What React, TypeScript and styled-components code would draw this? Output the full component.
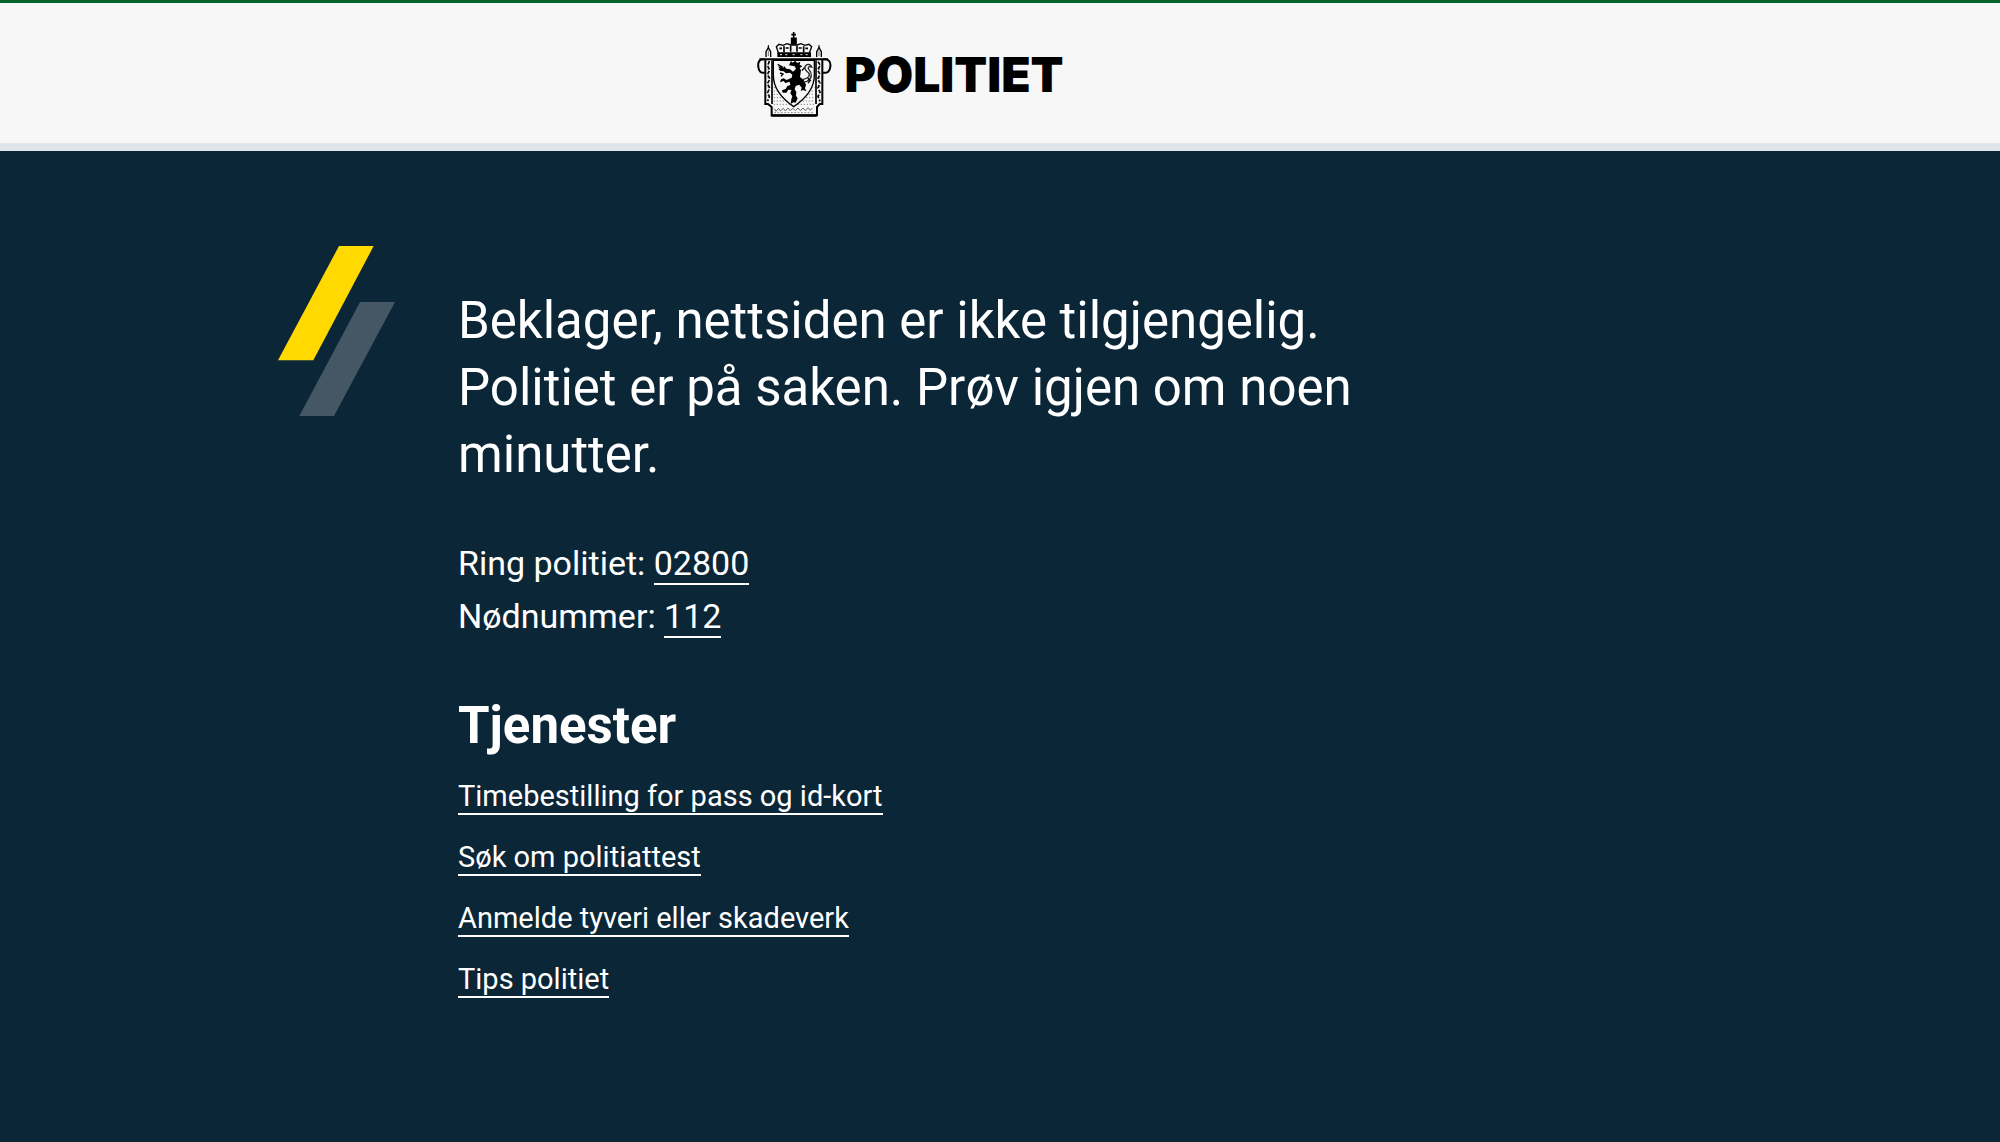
import React from "react";
import styled, { createGlobalStyle } from "styled-components";

const GlobalStyle = createGlobalStyle`
  *, *::before, *::after { box-sizing: border-box; }
  body {
    margin: 0;
    background: #0b2637;
    color: #ffffff;
    font-family: Roboto, "Liberation Sans", sans-serif;
  }
`;

const Header = styled.header`
  display: flex;
  justify-content: center;
  padding: 28px 180px 25px 0;
  background: #f7f7f7;
  border-top: 3px solid #04632a;
  border-bottom: 8px solid #dfe6eb;
`;

const Brand = styled.a`
  display: flex;
  align-items: center;
  gap: 10px;
  color: #000000;
  text-decoration: none;
`;

const BrandName = styled.span`
  font-family: Inter, "Liberation Sans", sans-serif;
  font-size: 48px;
  font-weight: 900;
  line-height: 56px;
`;

const Main = styled.main`
  padding: 95px 180px 96px 0;
`;

const Container = styled.div`
  display: flex;
  align-items: flex-start;
  gap: 63px;
  max-width: 1264px;
  margin: 0 auto;
`;

const Slashes = styled.svg`
  flex: none;
  width: 117px;
  height: 170px;
`;

const Content = styled.div`
  display: flex;
  flex-direction: column;
  gap: 49px;
  min-width: 0;
  padding-top: 41px;
`;

const Message = styled.h1`
  max-width: 960px;
  margin: 0;
  font-size: 51px;
  font-weight: 400;
  line-height: 67px;
`;

const Phones = styled.div`
  font-size: 34px;
  line-height: 53px;
`;

const PhoneLine = styled.p`
  margin: 0;
`;

const TextLink = styled.a`
  color: inherit;
  text-decoration: none;
  border-bottom: 2px solid currentColor;
`;

const SectionTitle = styled.h2`
  margin: 0;
  font-size: 51px;
  font-weight: 700;
  line-height: 67px;
`;

const ServiceList = styled.ul`
  display: flex;
  flex-direction: column;
  gap: 16px;
  margin: 15px 0 0;
  padding: 0;
  list-style: none;
  font-size: 29px;
  line-height: 45px;
`;

const services = [
  "Timebestilling for pass og id-kort",
  "Søk om politiattest",
  "Anmelde tyveri eller skadeverk",
  "Tips politiet",
];

const Crest = () => (
  <svg width="78" height="87" viewBox="54 32 234 261" fill="none" stroke="#000" strokeWidth="5" aria-hidden="true">
    {/* crown */}
    <path d="M167 35v18M160 43h14" />
    <path d="M161 54h13v17h-13z" fill="#000" />
    <path d="M122 100l-7-21 8-7 12 3 12-5 12 4h18l12-4 12 5 12-3 8 7-8 21" strokeWidth="4" />
    <path d="M124 84h8M143 83h9M182 83h9M202 84h8M138 78v18M158 76v18M177 76v18M197 78v18" strokeWidth="5" />
    <path d="M118 96h101v14H118z" fill="#000" stroke="none" />
    <path d="M126 103h6M142 103h6M164 103h6M187 103h6M203 103h6" stroke="#eee" strokeWidth="3" />
    {/* side finials */}
    <path d="M91 74v10M243 74v10" strokeWidth="3" />
    <path d="M84 110V94l7-12 7 12v16M236 110V94l7-12 7 12v16" strokeWidth="4" />
    <path d="M91 91v16M243 91v16" stroke="#777" strokeWidth="3" />
    {/* mantle frame and handles */}
    <path d="M64 117h206" strokeWidth="6" />
    <path d="M79 117c-15-2-20 9-18 23 1 13 8 19 19 17M255 117c17-3 24 8 22 22-1 14-9 20-22 18" strokeWidth="6" />
    <path d="M82 117v134h8l11 9v25h136v-25l8-9h8V117" strokeWidth="6" />
    <path d="M102 120v131M234 120v131" strokeWidth="5" />
    <path d="M94 122l-5 15 6 12-7 14 8 13-8 14 7 13-6 14 5 12-5 13M240 124l7 11-8 14 7 13-7 14 7 12-6 15 6 13-6 12 6 15" strokeWidth="5" strokeDasharray="11 5" />
    <path d="M90 133v114M245 133v114" stroke="#555" strokeWidth="2" strokeDasharray="3 10" />
    {/* mantle texture */}
    <g stroke="#888" strokeWidth="3" strokeDasharray="4 5">
      <path d="M107 202h10M107 212h18M107 222h26M107 232h34M107 242h44M107 252h122M219 202h11M211 212h19M203 222h27M195 232h35M185 242h45" />
    </g>
    <path d="M109 265l5 8 8-9 5 8 9-8 6 8 8-9 6 8 9-7 7 7 8-8 7 8 8-8 7 8 8-9 7 8 6-7" stroke="#666" strokeWidth="3" />
    <path d="M109 277h118" stroke="#888" strokeWidth="3" strokeDasharray="5 5" />
    <path d="M100 286h136" strokeWidth="7" />
    {/* shield */}
    <path d="M106 120h123v45c0 33-20 66-62 94-41-28-61-61-61-94z" fill="#f7f7f7" strokeWidth="4" />
    {/* lion */}
    <g fill="#000" stroke="none">
      <path d="M153 135l6-13 5 5 7-6 7 7 9-4-2 9 8 5-8 5 4 7-3 20 11 9 7 14-3 11 4 9-10-4-7 3 3-10-7-9-11 4-3 10 5 8-1 11 5 8-6 13-7-1-8 5 2-14 3-9-6-9 3-10-9-1-6 9-11 0-2-7 11-4 5-9 9-3-2-10-13 4-5-6-11 4 3-9 8-3 9 5 15-7 2-9-7-6-12 2-7-6-10-1-6-7 8-2-2-6 10 5 1-5 7 8 11 2 9 7 9-9-4-7z" />
    </g>
    <path d="M193 178c18-4 25-12 19-20-11-8-15-16-8-23 8-6 14-1 17 5-10-3-13 1-8 8 10 11 10 25-5 34l-12 5" stroke="#222" strokeWidth="4" />
    <path d="M119 132l12 7-7 1 8 9M126 158l9 3-6 7M199 142l-7 9M209 174l8 6-7 8" strokeWidth="4" />
  </svg>
);

export default function App() {
  return (
    <>
      <GlobalStyle />
      <Header>
        <Brand href="#">
          <Crest />
          <BrandName>POLITIET</BrandName>
        </Brand>
      </Header>
      <Main>
        <Container>
          <Slashes viewBox="54 50 351 510" aria-hidden="true">
            <polygon points="237,50 341,50 160,393 54,393" fill="#ffd900" />
            <polygon points="300,218 405,218 222,560 118,560" fill="#455664" />
          </Slashes>
          <Content>
            <Message>
              Beklager, nettsiden er ikke tilgjengelig. Politiet er på saken. Prøv igjen om noen minutter.
            </Message>
            <Phones>
              <PhoneLine>
                Ring politiet: <TextLink href="tel:02800">02800</TextLink>
              </PhoneLine>
              <PhoneLine>
                Nødnummer: <TextLink href="tel:112">112</TextLink>
              </PhoneLine>
            </Phones>
            <section>
              <SectionTitle>Tjenester</SectionTitle>
              <ServiceList>
                {services.map((name) => (
                  <li key={name}>
                    <TextLink href="#">{name}</TextLink>
                  </li>
                ))}
              </ServiceList>
            </section>
          </Content>
        </Container>
      </Main>
    </>
  );
}
